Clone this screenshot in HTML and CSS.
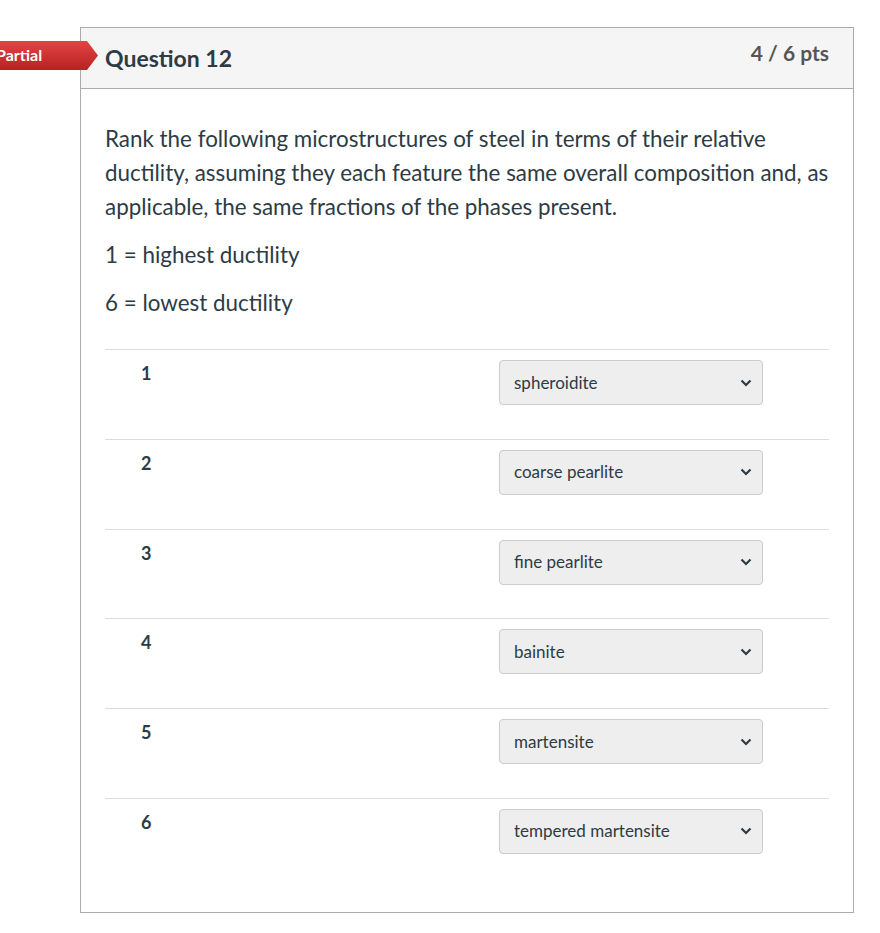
FILE: index.html
```html
<!DOCTYPE html>
<html>
<head>
<meta charset="utf-8">
<link rel="stylesheet" href="styles.css">
</head>
<body>
<div class="page">
  <div class="badge">Partial</div>
  <div class="card">
    <div class="card-header">
      <h2 class="title">Question 12</h2>
      <span class="pts">4 / 6 pts</span>
    </div>
    <div class="card-body">
      <p>Rank the following microstructures of steel in terms of their relative ductility, assuming they each feature the same overall composition and, as applicable, the same fractions of the phases present.</p>
      <p>1 = highest ductility</p>
      <p>6 = lowest ductility</p>
      <div class="rows">
        <div class="row"><div class="num">1</div><div class="sel"><span>spheroidite</span><svg viewBox="0 0 12 8" width="12" height="8"><path d="M1.5 1.5 L6 6 L10.5 1.5" fill="none" stroke="#2d3b45" stroke-width="2.2"/></svg></div></div>
        <div class="row"><div class="num">2</div><div class="sel"><span>coarse pearlite</span><svg viewBox="0 0 12 8" width="12" height="8"><path d="M1.5 1.5 L6 6 L10.5 1.5" fill="none" stroke="#2d3b45" stroke-width="2.2"/></svg></div></div>
        <div class="row"><div class="num">3</div><div class="sel"><span>fine pearlite</span><svg viewBox="0 0 12 8" width="12" height="8"><path d="M1.5 1.5 L6 6 L10.5 1.5" fill="none" stroke="#2d3b45" stroke-width="2.2"/></svg></div></div>
        <div class="row"><div class="num">4</div><div class="sel"><span>bainite</span><svg viewBox="0 0 12 8" width="12" height="8"><path d="M1.5 1.5 L6 6 L10.5 1.5" fill="none" stroke="#2d3b45" stroke-width="2.2"/></svg></div></div>
        <div class="row"><div class="num">5</div><div class="sel"><span>martensite</span><svg viewBox="0 0 12 8" width="12" height="8"><path d="M1.5 1.5 L6 6 L10.5 1.5" fill="none" stroke="#2d3b45" stroke-width="2.2"/></svg></div></div>
        <div class="row"><div class="num">6</div><div class="sel"><span>tempered martensite</span><svg viewBox="0 0 12 8" width="12" height="8"><path d="M1.5 1.5 L6 6 L10.5 1.5" fill="none" stroke="#2d3b45" stroke-width="2.2"/></svg></div></div>
      </div>
    </div>
  </div>
</div>
</body>
</html>
```
FILE: styles.css
```css
html, body {
  margin: 0;
  padding: 0;
  background: #fff;
}
body {
  font-family: Lato, "Liberation Sans", sans-serif;
  color: #2d3b45;
}
.page {
  position: relative;
  padding: 27px 0 0 80px;
}
.badge {
  position: absolute;
  left: -9px;
  top: 41px;
  height: 29px;
  width: 107px;
  box-sizing: border-box;
  padding-left: 5px;
  line-height: 27px;
  color: #fff;
  font-weight: 700;
  font-size: 16px;
  background: linear-gradient(#e34444, #b82222);
  clip-path: polygon(0 0, 96px 0, 107px 50%, 96px 100%, 0 100%);
  z-index: 2;
}
.card {
  width: 774px;
  box-sizing: border-box;
  border: 1px solid #ababab;
  height: 886px;
}
.card-header {
  background: #f5f5f5;
  border-bottom: 1px solid #ababab;
  height: 61px;
  box-sizing: border-box;
  display: flex;
  justify-content: space-between;
  align-items: center;
  padding: 0 24px;
}
.title {
  margin: 0;
  font-size: 23px;
  font-weight: 700;
  color: #2d3b45;
  padding-bottom: 1px;
}
.pts {
  font-size: 21px;
  font-weight: 700;
  color: #555;
  padding-bottom: 12px;
}
.card-body {
  padding: 33px 24px 0 24px;
}
.card-body p {
  margin: 0 0 14px 0;
  font-size: 22.4px;
  line-height: 34px;
}
.rows {
  margin-top: 29px;
}
.row {
  border-top: 1px solid #dcdcdc;
  height: 88.8px;
  display: flex;
  align-items: flex-start;
}
.num {
  width: 394px;
  box-sizing: border-box;
  padding-left: 36px;
  padding-top: 12px;
  font-size: 18px;
  font-weight: 700;
}
.sel {
  margin-top: 10px;
  width: 264px;
  height: 45px;
  box-sizing: border-box;
  border: 1px solid #c7cdd1;
  border-radius: 4px;
  background: #eeeeee;
  display: flex;
  align-items: center;
  justify-content: space-between;
  padding: 0 10px 0 14px;
  font-size: 17px;
  color: #2d3b45;
}
.sel span {
  padding-bottom: 1px;
}
```
